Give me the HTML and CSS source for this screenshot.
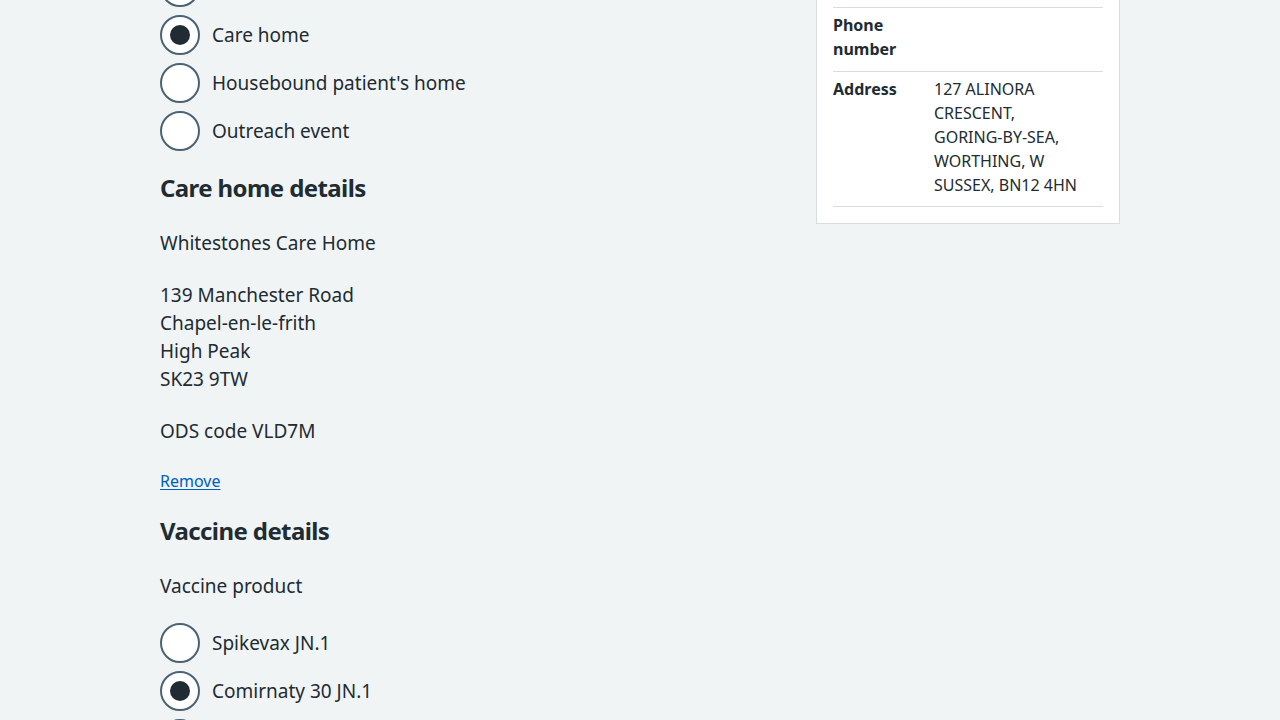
FILE: index.html
```html
<!DOCTYPE html>
<html lang="en">
<head>
<meta charset="utf-8">
<title>Record a vaccination</title>
<link rel="stylesheet" href="styles.css">
</head>
<body>
<div class="page">
  <main class="main">
    <div class="radios radios--site">
      <label class="radio"><span class="radio__control"></span><span class="radio__label">Hospital hub</span></label>
      <label class="radio"><span class="radio__control"></span><span class="radio__label">Vaccination centre</span></label>
      <label class="radio"><span class="radio__control"></span><span class="radio__label">Pharmacy</span></label>
      <label class="radio"><span class="radio__control radio__control--checked"></span><span class="radio__label">Care home</span></label>
      <label class="radio"><span class="radio__control"></span><span class="radio__label">Housebound patient's home</span></label>
      <label class="radio"><span class="radio__control"></span><span class="radio__label">Outreach event</span></label>
    </div>

    <h2 class="heading heading--care">Care home details</h2>
    <p class="body">Whitestones Care Home</p>
    <p class="body">139 Manchester Road<br>Chapel-en-le-frith<br>High Peak<br>SK23 9TW</p>
    <p class="body">ODS code VLD7M</p>
    <p class="small"><a class="link" href="#">Remove</a></p>

    <h2 class="heading heading--vaccine">Vaccine details</h2>
    <p class="body body--legend">Vaccine product</p>
    <div class="radios">
      <label class="radio"><span class="radio__control"></span><span class="radio__label">Spikevax JN.1</span></label>
      <label class="radio"><span class="radio__control radio__control--checked"></span><span class="radio__label">Comirnaty 30 JN.1</span></label>
      <label class="radio"><span class="radio__control"></span><span class="radio__label">Comirnaty 10 JN.1</span></label>
    </div>
  </main>

  <aside class="side">
    <div class="card">
      <dl class="summary">
        <div class="summary__row"><dt class="summary__key">Name</dt><dd class="summary__value">ALEX SMITH</dd></div>
        <div class="summary__row"><dt class="summary__key">Sex</dt><dd class="summary__value">Female</dd></div>
        <div class="summary__row"><dt class="summary__key">Born</dt><dd class="summary__value">1 May 1950</dd></div>
        <div class="summary__row"><dt class="summary__key">Phone number</dt><dd class="summary__value"></dd></div>
        <div class="summary__row"><dt class="summary__key">Address</dt><dd class="summary__value">127 ALINORA<br>CRESCENT,<br>GORING-BY-SEA,<br>WORTHING, W<br>SUSSEX, BN12 4HN</dd></div>
      </dl>
    </div>
  </aside>
</div>
</body>
</html>
```

FILE: styles.css
```css
html, body {
  margin: 0;
  padding: 0;
  background: #f0f4f5;
}

body {
  font-family: "Noto Sans", "Open Sans", sans-serif;
  color: #212b32;
  -webkit-font-smoothing: antialiased;
}

.page {
  width: 960px;
  margin: -129px auto 0;
  display: grid;
  grid-template-columns: 1fr 304px;
  column-gap: 32px;
  align-items: start;
}

.radios {
  display: flex;
  flex-direction: column;
  gap: 8px;
}

.radios--site {
  margin-bottom: 21px;
}

.radio {
  display: flex;
  align-items: center;
  gap: 12px;
  height: 40px;
  cursor: pointer;
}

.radio__control {
  box-sizing: border-box;
  width: 40px;
  height: 40px;
  flex: none;
  border: 2px solid #4c6272;
  border-radius: 50%;
  background: #fff;
  display: flex;
  align-items: center;
  justify-content: center;
}

.radio__control--checked::after {
  content: "";
  width: 20px;
  height: 20px;
  border-radius: 50%;
  background: #212b32;
}

.radio__label {
  font-size: 19px;
  line-height: 28px;
}

.heading {
  font-size: 24px;
  line-height: 32px;
  font-weight: 700;
  letter-spacing: -0.6px;
  margin: 0 0 24px;
}

.heading--care {
  margin-bottom: 25px;
}

.heading--vaccine {
  margin-top: 22px;
  margin-bottom: 25px;
}

.body {
  font-size: 19px;
  line-height: 28px;
  margin: 0 0 24px;
}

.body--legend {
  margin-bottom: 23px;
}

.small {
  font-size: 16px;
  line-height: 24px;
  margin: 24px 0 0;
}

.link {
  color: #005eb8;
  text-decoration: underline;
  text-underline-offset: 2px;
  text-decoration-thickness: 1px;
}

.card {
  background: #fff;
  border: 1px solid #d8dde0;
  padding: 16px 16px 16px;
}

.summary {
  margin: 0;
  font-size: 16px;
  line-height: 24px;
}

.summary__row {
  display: grid;
  grid-template-columns: 101px 1fr;
  border-bottom: 1px solid #d8dde0;
  padding: 5px 0 10px;
}

.summary__row:last-child {
  padding-bottom: 9px;
}

.summary__key {
  font-weight: 700;
  padding-right: 16px;
}

.summary__value {
  margin: 0;
}
```
